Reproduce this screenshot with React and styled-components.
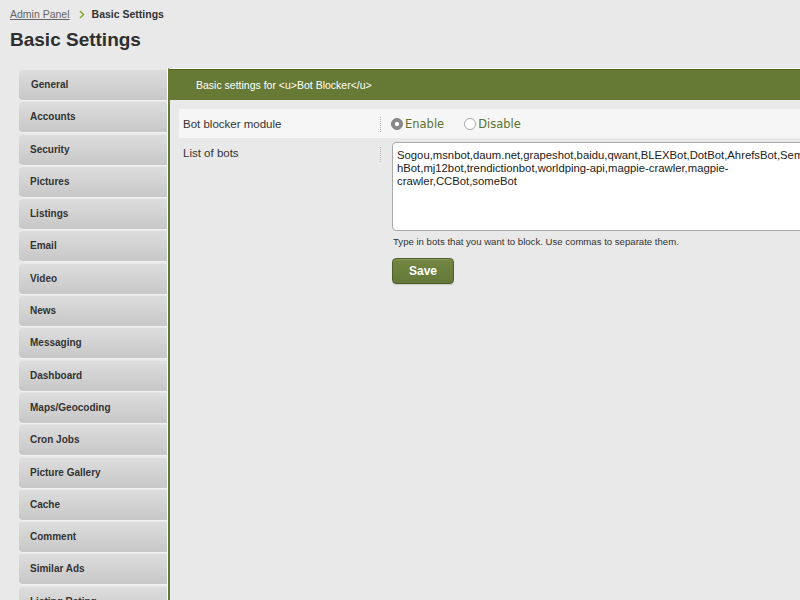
import React from "react";
import styled, { createGlobalStyle } from "styled-components";

const GlobalStyle = createGlobalStyle`
  html, body {
    margin: 0;
    padding: 0;
    background: #e9e9e9;
    overflow: hidden;
  }
  body {
    font-family: "Liberation Sans", Arial, sans-serif;
    color: #333;
  }
`;

const menu = [
  "General",
  "Accounts",
  "Security",
  "Pictures",
  "Listings",
  "Email",
  "Video",
  "News",
  "Messaging",
  "Dashboard",
  "Maps/Geocoding",
  "Cron Jobs",
  "Picture Gallery",
  "Cache",
  "Comment",
  "Similar Ads",
  "Listing Rating",
];

const bots =
  "Sogou,msnbot,daum.net,grapeshot,baidu,qwant,BLEXBot,DotBot,AhrefsBot,Semrus\n" +
  "hBot,mj12bot,trendictionbot,worldping-api,magpie-crawler,magpie-\n" +
  "crawler,CCBot,someBot";

const App = () => {
  return (
    <Page>
      <GlobalStyle />
      <Breadcrumb>
        <CrumbLink href="#">Admin Panel</CrumbLink>
        <Chevron viewBox="0 0 6 9" aria-hidden="true">
          <path d="M1 1l3.5 3.5L1 8" />
        </Chevron>
        <CrumbCurrent>Basic Settings</CrumbCurrent>
      </Breadcrumb>
      <Title>Basic Settings</Title>

      <Layout>
        <Sidebar>
          {menu.map((item, i) => (
            <MenuItem key={item} $first={i === 0}>
              {item}
            </MenuItem>
          ))}
        </Sidebar>

        <Main>
          <PanelHeader>Basic settings for &lt;u&gt;Bot Blocker&lt;/u&gt;</PanelHeader>

          <Form>
            <Row $shaded>
              <Label>Bot blocker module</Label>
              <Divider />
              <Control>
                <RadioOption>
                  <RadioDot $checked />
                  Enable
                </RadioOption>
                <RadioOption>
                  <RadioDot />
                  Disable
                </RadioOption>
              </Control>
            </Row>

            <Row $top>
              <Label $top>List of bots</Label>
              <Divider $top />
              <Control $column>
                <BotsInput defaultValue={bots} wrap="off" spellCheck={false} />
                <Help>Type in bots that you want to block. Use commas to separate them.</Help>
                <SaveButton>Save</SaveButton>
              </Control>
            </Row>
          </Form>
        </Main>
      </Layout>
    </Page>
  );
};

export default App;

const Page = styled.div`
  width: 960px;
  min-height: 600px;
`;

const Breadcrumb = styled.div`
  display: flex;
  align-items: center;
  padding: 7px 10px 0;
  height: 14px;
  line-height: 14px;
  font-size: 10.5px;
`;

const CrumbLink = styled.a`
  color: #666;
  text-decoration: underline;
`;

const Chevron = styled.svg`
  width: 6px;
  height: 9px;
  margin: 1px 7px 0 9px;
  fill: none;
  stroke: #86ad2c;
  stroke-width: 1.6;
`;

const CrumbCurrent = styled.span`
  font-weight: bold;
  color: #333;
`;

const Title = styled.h1`
  margin: 8px 0 0 10px;
  font-size: 19px;
  line-height: 22px;
  font-weight: bold;
  color: #2f2f2f;
`;

const Layout = styled.div`
  display: flex;
  align-items: flex-start;
  margin-top: 17px;
  padding-left: 19px;
`;

const Sidebar = styled.div`
  width: 148px;
  margin-top: 1px;
  flex-shrink: 0;
`;

const MenuItem = styled.div`
  height: 31px;
  margin-bottom: 1.3px;
  padding-left: ${(p) => (p.$first ? "12px" : "11px")};
  display: flex;
  align-items: center;
  font-size: 10px;
  font-weight: bold;
  color: #333;
  border-radius: 4px 0 0 4px;
  background: linear-gradient(#dedede, #c7c7c7);
  box-shadow: inset 0 1px 0 #e8e8e8, 0 1px 0 #f2f2f2;
  cursor: pointer;
`;

const Main = styled.div`
  flex: 1;
  min-height: 540px;
  border-left: 2px solid #667a36;
  border-top: 1px solid #fff;
  box-shadow: -1px 0 0 #fff;
  margin-left: 1px;
`;

const PanelHeader = styled.div`
  height: 30px;
  border-top: 1px solid #51661f;
  background: #667a36;
  color: #fff;
  font-size: 10.5px;
  display: flex;
  align-items: center;
  padding-left: 26px;
`;

const Form = styled.div`
  padding: 9px 0 0 9px;
`;

const Row = styled.div`
  display: grid;
  grid-template-columns: 201px 12px 1fr;
  align-items: ${(p) => (p.$top ? "start" : "center")};
  height: ${(p) => (p.$top ? "auto" : "29px")};
  margin-top: ${(p) => (p.$top ? "2px" : "0")};
  background: ${(p) => (p.$shaded ? "#f6f6f6" : "transparent")};
`;

const Label = styled.div`
  padding-left: 4px;
  padding-top: ${(p) => (p.$top ? "6px" : "0")};
  font-size: 11.5px;
  line-height: 14px;
  color: #333;
`;

const Divider = styled.span`
  display: block;
  width: 0;
  height: 15px;
  margin-top: ${(p) => (p.$top ? "7px" : "1px")};
  border-left: 1px dotted #b5b5b5;
`;

const Control = styled.div`
  display: flex;
  flex-direction: ${(p) => (p.$column ? "column" : "row")};
  align-items: ${(p) => (p.$column ? "flex-start" : "center")};
  gap: ${(p) => (p.$column ? "0" : "20px")};
  padding-top: ${(p) => (p.$column ? "2px" : "0")};
  margin-left: ${(p) => (p.$column ? "0" : "-1px")};
`;

const RadioOption = styled.label`
  display: flex;
  align-items: center;
  gap: 2px;
  font-family: "DejaVu Sans", Verdana, sans-serif;
  font-size: 11.5px;
  color: #5b7230;
  cursor: pointer;
`;

const RadioDot = styled.span`
  box-sizing: border-box;
  width: 12px;
  height: 12px;
  border-radius: 50%;
  border: 1px solid ${(p) => (p.$checked ? "#7d7d7d" : "#a9a9a9")};
  background: ${(p) =>
    p.$checked
      ? "radial-gradient(circle, #fff 0 1.8px, #8a8a8a 2.4px)"
      : "#fff"};
`;

const BotsInput = styled.textarea`
  box-sizing: border-box;
  width: 520px;
  height: 89px;
  margin: 0;
  padding: 6px 4px;
  border: 1px solid #a8a8a8;
  border-radius: 4px;
  background: #fff;
  font-family: "Liberation Sans", Arial, sans-serif;
  font-size: 11.3px;
  line-height: 13px;
  color: #222;
  resize: none;
  overflow: hidden;
  white-space: pre;
  outline: none;
`;

const Help = styled.div`
  margin: 5px 0 0 1px;
  font-size: 9.6px;
  line-height: 12px;
  color: #333;
`;

const SaveButton = styled.button`
  margin: 10px 0 0;
  width: 62px;
  height: 26px;
  border: 1px solid #4e5f27;
  border-radius: 4px;
  background: linear-gradient(#738741, #63773a);
  box-shadow: inset 0 1px 0 rgba(255, 255, 255, 0.15), 0 1px 1px rgba(0, 0, 0, 0.15);
  color: #fff;
  font-family: "Liberation Sans", Arial, sans-serif;
  font-size: 12px;
  font-weight: bold;
  cursor: pointer;
`;
